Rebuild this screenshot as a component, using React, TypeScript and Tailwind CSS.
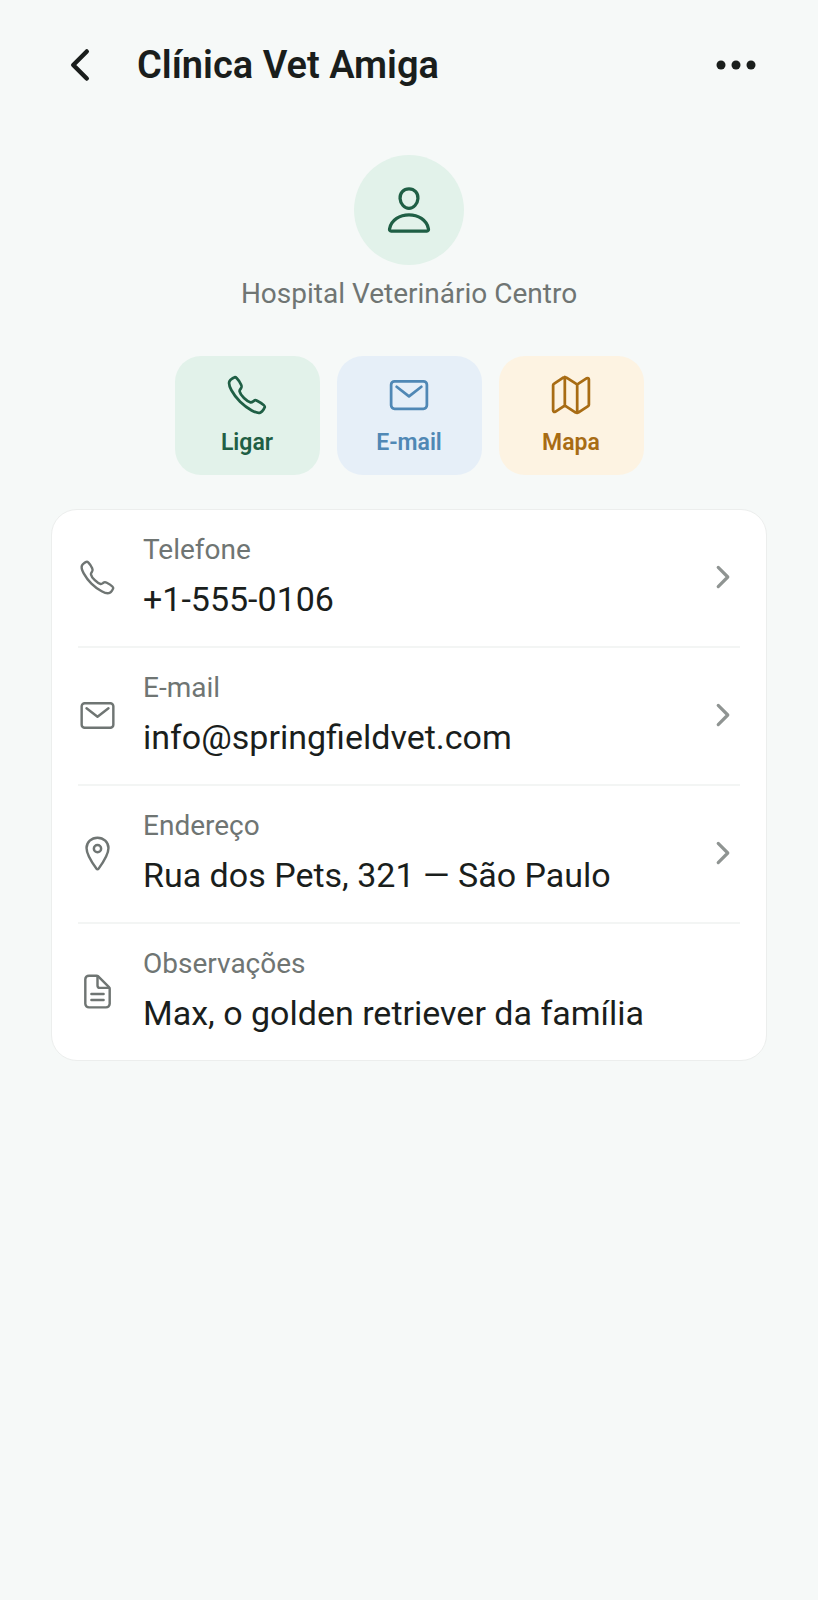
import type { IconType } from 'react-icons';
import {
  IoCallOutline,
  IoChevronBack,
  IoChevronForward,
  IoDocumentTextOutline,
  IoEllipsisHorizontal,
  IoLocationOutline,
  IoMailOutline,
  IoMapOutline,
  IoPersonOutline,
} from 'react-icons/io5';

interface DetailRowProps {
  icon: IconType;
  label: string;
  value: string;
  href?: string;
}

const actions = [
  { id: 'call', label: 'Ligar', icon: IoCallOutline, style: 'bg-[#e2f2ea] text-[#1f5f45]' },
  { id: 'email', label: 'E-mail', icon: IoMailOutline, style: 'bg-[#e6eff8] text-[#5088b5]' },
  { id: 'map', label: 'Mapa', icon: IoMapOutline, style: 'bg-[#fdf3e2] text-[#a86c14]' },
];

const details: DetailRowProps[] = [
  { icon: IoCallOutline, label: 'Telefone', value: '+1-555-0106', href: 'tel:+1-555-0106' },
  { icon: IoMailOutline, label: 'E-mail', value: 'info@springfieldvet.com', href: 'mailto:info@springfieldvet.com' },
  { icon: IoLocationOutline, label: 'Endereço', value: 'Rua dos Pets, 321 — São Paulo', href: '#mapa' },
  { icon: IoDocumentTextOutline, label: 'Observações', value: 'Max, o golden retriever da família' },
];

function DetailRow({ icon: Icon, label, value, href }: DetailRowProps) {
  const content = (
    <>
      <Icon className="size-[39px] shrink-0 text-[#6f7573]" />
      <span className="flex-1 min-w-0 flex flex-col gap-2">
        <span className="text-[28px] leading-9 text-[#6f7573]">{label}</span>
        <span className="text-[34px] leading-[46px] text-[#1a1e1c]">{value}</span>
      </span>
      {href && <IoChevronForward className="size-[34px] shrink-0 text-[#8f9492]" />}
    </>
  );

  const rowClass = 'flex items-center gap-[26px] pt-[22px] pb-6';

  return (
    <li className="border-b-2 border-[#f3f5f4] last:border-b-0">
      {href ? (
        <a href={href} className={rowClass}>{content}</a>
      ) : (
        <div className={rowClass}>{content}</div>
      )}
    </li>
  );
}

export default function App() {
  return (
    <div className="min-h-screen bg-[#f6f9f8] font-[Roboto,sans-serif] text-[#1a1e1c]">
      {/* Header */}
      <header className="flex items-center pl-14 pr-[58px] pt-[33px]">
        <button type="button" aria-label="Voltar" className="size-12 flex items-center justify-center">
          <IoChevronBack className="size-12" />
        </button>
        <h1 className="flex-1 min-w-0 pl-[33px] text-[38px] leading-16 font-semibold">Clínica Vet Amiga</h1>
        <button type="button" aria-label="Mais opções" className="size-12 flex items-center justify-center">
          <IoEllipsisHorizontal className="size-12" />
        </button>
      </header>

      <main className="px-[51px] pt-[58px]">
        {/* Profile */}
        <section className="flex flex-col items-center">
          <div className="size-[110px] rounded-full bg-[#e2f2ea] text-[#1f5f45] flex items-center justify-center">
            <IoPersonOutline className="size-[52px]" />
          </div>
          <p className="mt-[9px] text-[28px] leading-10 text-[#6f7573]">Hospital Veterinário Centro</p>
        </section>

        {/* Quick actions */}
        <div className="mt-[42px] flex justify-center gap-[17px]">
          {actions.map((action) => {
            const Icon = action.icon;
            return (
              <button
                key={action.id}
                type="button"
                className={`w-[145px] h-[119px] pt-[3px] rounded-[26px] flex flex-col items-center justify-center gap-2 ${action.style}`}
              >
                <Icon className="size-11" />
                <span className="text-[23px] leading-9 font-semibold">{action.label}</span>
              </button>
            );
          })}
        </div>

        {/* Contact details */}
        <ul className="mt-[34px] px-[26px] rounded-[26px] bg-white border border-[#eceeed]">
          {details.map((item) => (
            <DetailRow key={item.label} {...item} />
          ))}
        </ul>
      </main>
    </div>
  );
}
